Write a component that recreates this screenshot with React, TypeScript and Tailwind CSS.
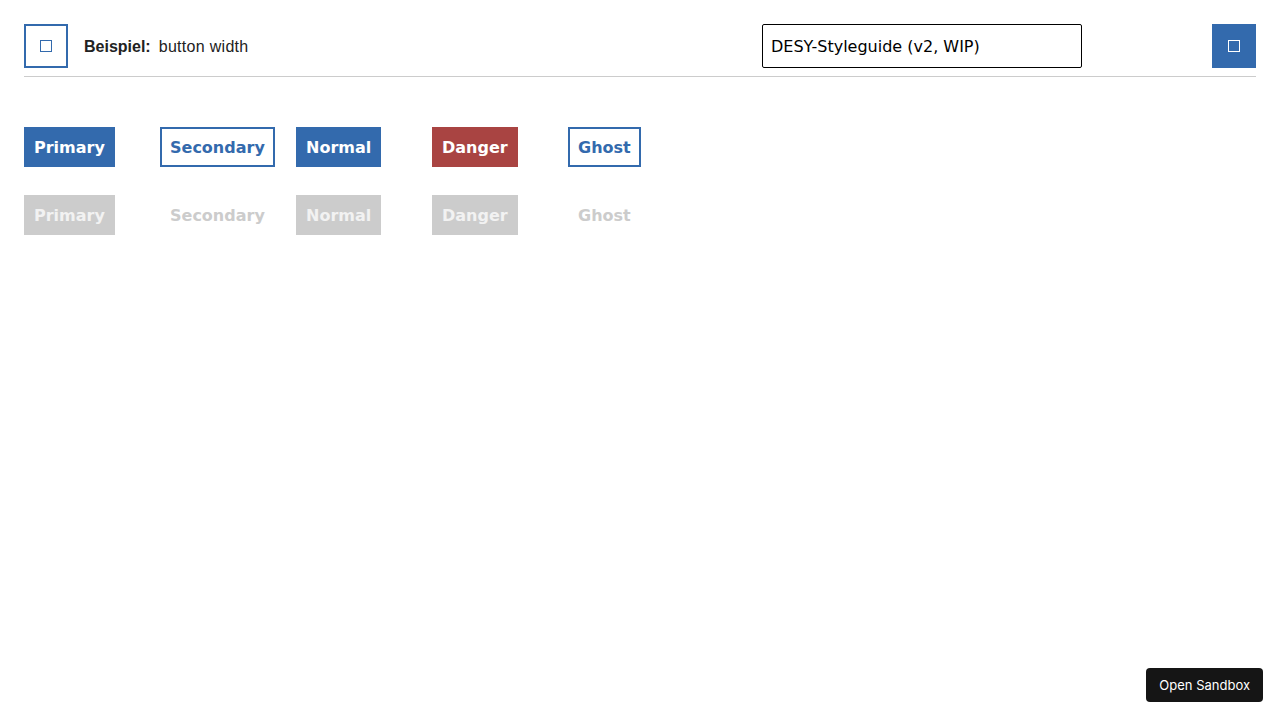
const BLUE = 'bg-[#336aad]';

function SquareIcon({ light }: { light?: boolean }) {
  return (
    <span
      className={
        'block w-[12px] h-[12px] border ' + (light ? 'border-white' : 'border-[#336aad]')
      }
    />
  );
}

const variants = [
  { label: 'Primary', on: `${BLUE} text-white border-2 border-[#336aad]`, off: 'bg-[#cccccc] text-[#f2f2f2] border-2 border-[#cccccc]' },
  { label: 'Secondary', on: 'bg-white text-[#336aad] border-2 border-[#336aad]', off: 'bg-white text-[#cccccc] border-2 border-white' },
  { label: 'Normal', on: `${BLUE} text-white border-2 border-[#336aad]`, off: 'bg-[#cccccc] text-[#f2f2f2] border-2 border-[#cccccc]' },
  { label: 'Danger', on: 'bg-[#a94442] text-white border-2 border-[#a94442]', off: 'bg-[#cccccc] text-[#f2f2f2] border-2 border-[#cccccc]' },
  { label: 'Ghost', on: 'bg-white text-[#336aad] border-2 border-[#336aad]', off: 'bg-white text-[#cccccc] border-2 border-white' },
];

export default function App() {
  return (
    <div className="relative w-[1280px] h-[720px] bg-white overflow-hidden">
      {/* Header */}
      <div className="mx-6 pt-6 pb-2 border-b border-[#cccccc] flex items-center">
        <button className="w-[44px] h-[44px] border-2 border-[#336aad] flex items-center justify-center">
          <SquareIcon />
        </button>
        <div className="ml-4 pt-[2px] flex items-center text-[16px] text-[#222] font-['Helvetica','Liberation_Sans',sans-serif]">
          <span className="font-bold">Beispiel:</span>
          <span className="ml-[8px] tracking-[0.3px]">button width</span>
        </div>
        <div className="flex-1" />
        <div className="w-[320px] h-[44px] border border-black rounded-[2px] flex items-center px-[8px] pt-[2px] text-[16px] text-black font-['Verdana','DejaVu_Sans',sans-serif]">
          DESY-Styleguide (v2, WIP)
        </div>
        <button className={`ml-[130px] w-[44px] h-[44px] ${BLUE} flex items-center justify-center`}>
          <SquareIcon light />
        </button>
      </div>

      {/* Buttons */}
      <div className="mt-[50px] mx-6 flex flex-col gap-[28px]">
        {['on', 'off'].map((state) => (
          <div key={state} className="grid grid-cols-[repeat(5,136px)]">
            {variants.map((v) => (
              <div key={v.label}>
                <button
                  className={
                    'h-[40px] px-[8px] pt-[2px] text-[16px] font-bold font-["Verdana","DejaVu_Sans",sans-serif] ' +
                    (state === 'on' ? v.on : v.off)
                  }
                >
                  {v.label}
                </button>
              </div>
            ))}
          </div>
        ))}
      </div>

      {/* Open Sandbox */}
      <button className="absolute right-[17px] bottom-[18px] h-[34px] px-[13px] pt-[1px] rounded-[4px] bg-[#151515] text-white text-[13px] font-['Inter','Liberation_Sans',sans-serif]">
        Open Sandbox
      </button>
    </div>
  );
}
